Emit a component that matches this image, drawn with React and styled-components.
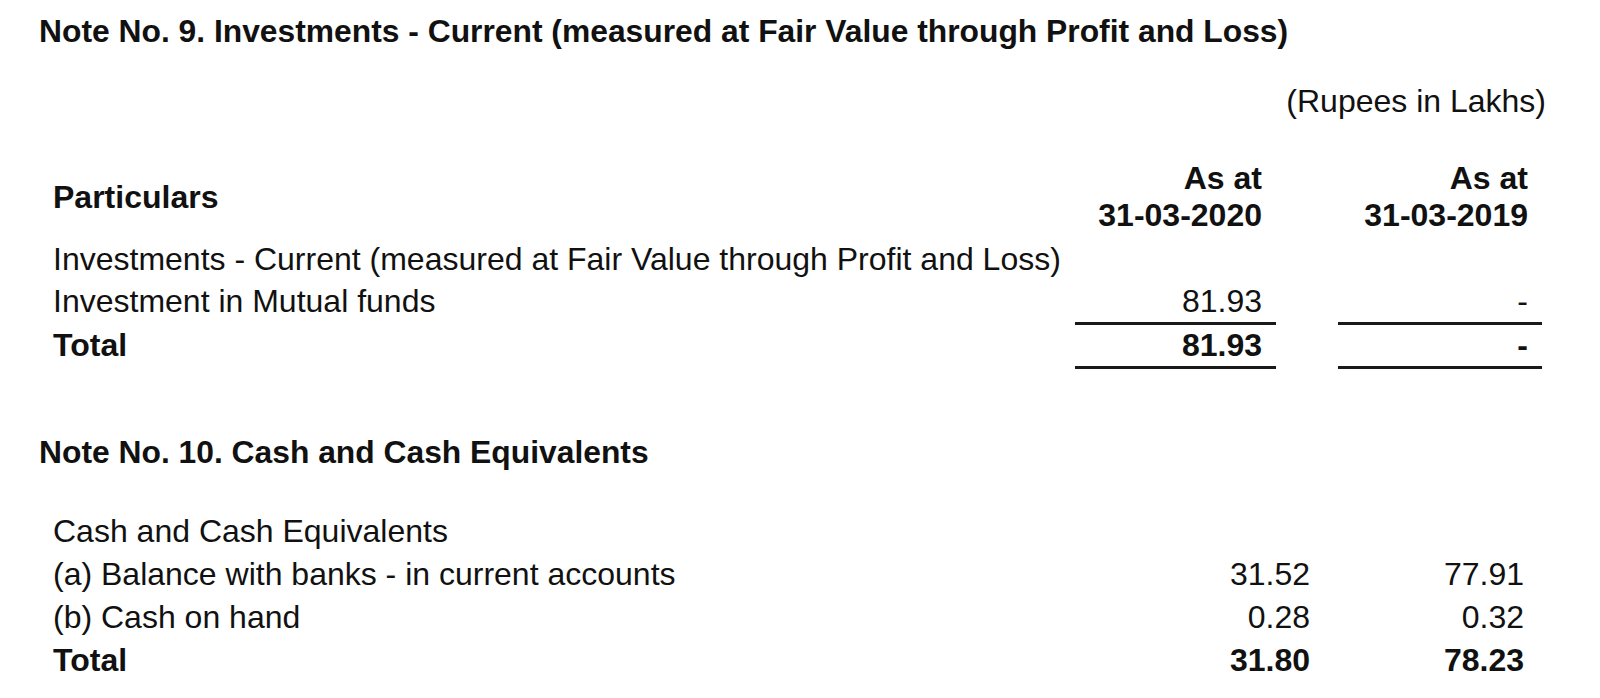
import { createGlobalStyle } from "styled-components";
import styled from "styled-components";

const GlobalStyle = createGlobalStyle`
  body {
    margin: 0;
    background: #ffffff;
    color: #111111;
    font-family: "Liberation Sans", Arial, Helvetica, sans-serif;
  }
`;

const Page = styled.div`
  width: 1600px;
  padding: 10px 0 20px 39px;
  box-sizing: border-box;
`;

const NoteTitle = styled.h2`
  margin: ${(p) => p.$top || 0}px 0 0 0;
  font-size: 31.8px;
  line-height: 43px;
  font-weight: 700;
`;

const Units = styled.div`
  margin-top: 27px;
  width: 1507px;
  text-align: right;
  font-size: 32px;
  line-height: 43px;
`;

const Table = styled.div`
  margin-top: ${(p) => p.$top || 0}px;
  padding-left: 14px;
`;

const Row = styled.div`
  display: grid;
  grid-template-columns: ${(p) => p.$cols};
  column-gap: ${(p) => p.$gap || 0}px;
  font-size: 32px;
  line-height: 43px;
  font-weight: ${(p) => (p.$bold ? 700 : 400)};
`;

const HeadRow = styled(Row)`
  line-height: 37px;
  font-weight: 700;
  align-items: center;
  padding-bottom: 4px;
`;

const Label = styled.div`
  white-space: nowrap;
`;

const Amount = styled.div`
  text-align: right;
  padding-right: ${(p) => p.$pad || 0}px;
  border-bottom: ${(p) => (p.$rule ? "3px solid #1a1a1a" : "none")};
  line-height: ${(p) => (p.$rule ? 41 : 43)}px;
`;

const HeadAmount = styled(Amount)`
  line-height: 37px;
`;

const LabelCell = styled(Label)`
  line-height: ${(p) => (p.$rule ? 41 : 43)}px;
  padding-bottom: ${(p) => (p.$rule ? 3 : 0)}px;
`;

const NOTE9_COLS = "960px 201px 204px";

const note9Rows = [
  { label: "Investments - Current (measured at Fair Value through Profit and Loss)", a: "", b: "" },
  { label: "Investment in Mutual funds", a: "81.93", b: "-", rule: true },
  { label: "Total", a: "81.93", b: "-", rule: true, bold: true },
];

const NOTE10_COLS = "1057px 200px 214px";

const note10Rows = [
  { label: "Cash and Cash Equivalents", a: "", b: "" },
  { label: "(a) Balance with banks - in current accounts", a: "31.52", b: "77.91" },
  { label: "(b) Cash on hand", a: "0.28", b: "0.32" },
  { label: "Total", a: "31.80", b: "78.23", bold: true },
];

export default function App() {
  return (
    <>
      <GlobalStyle />
      <Page>
        <NoteTitle>
          Note No. 9. Investments - Current (measured at Fair Value through Profit and Loss)
        </NoteTitle>
        <Units>(Rupees in Lakhs)</Units>

        <Table $top={37}>
          <HeadRow $cols={NOTE9_COLS} $gap={62}>
            <Label>Particulars</Label>
            <HeadAmount $pad={14}>
              As at
              <br />
              31-03-2020
            </HeadAmount>
            <HeadAmount $pad={14}>
              As at
              <br />
              31-03-2019
            </HeadAmount>
          </HeadRow>
          {note9Rows.map((r) => (
            <Row key={r.label} $cols={NOTE9_COLS} $gap={62} $bold={r.bold}>
              <LabelCell $rule={r.rule}>{r.label}</LabelCell>
              <Amount $pad={14} $rule={r.rule}>{r.a}</Amount>
              <Amount $pad={14} $rule={r.rule}>{r.b}</Amount>
            </Row>
          ))}
        </Table>

        <NoteTitle $top={62}>Note No. 10. Cash and Cash Equivalents</NoteTitle>

        <Table $top={36}>
          {note10Rows.map((r) => (
            <Row key={r.label} $cols={NOTE10_COLS} $bold={r.bold}>
              <LabelCell>{r.label}</LabelCell>
              <Amount>{r.a}</Amount>
              <Amount>{r.b}</Amount>
            </Row>
          ))}
        </Table>
      </Page>
    </>
  );
}
